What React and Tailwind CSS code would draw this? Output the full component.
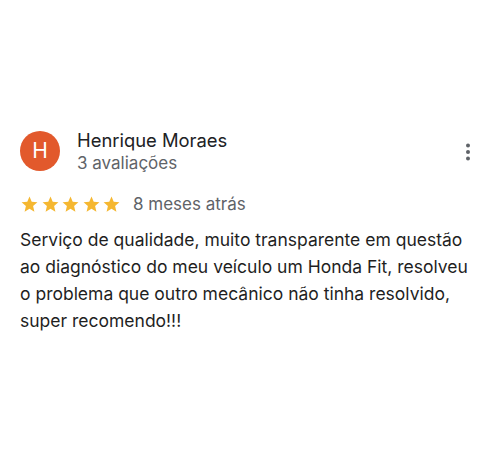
import React from "react";

const Star = () => (
  <svg width="19" height="19" viewBox="0 0 24 24" className="block">
    <path fill="#f5b731" d="M12 17.27L18.18 21l-1.64-7.03L22 9.24l-7.19-.61L12 2 9.19 8.63 2 9.24l5.46 4.73L5.82 21z" />
  </svg>
);

export default function App() {
  return (
    <div className="w-[500px] h-[466px] bg-white" style={{ fontFamily: "Inter, 'Liberation Sans', sans-serif" }}>
      <div className="pt-[131px] pl-[20px] pr-[20px]">
        <div className="flex items-start">
          <div className="w-[40px] h-[40px] rounded-full bg-[#e2592c] flex items-center justify-center text-white text-[21px] shrink-0">
            H
          </div>
          <div className="ml-[17px] flex-1 -mt-[3px]">
            <div className="text-[18.4px] leading-[24px] text-[#202124]">Henrique Moraes</div>
            <div className="text-[17px] leading-[22px] text-[#5f6368]">3 avaliações</div>
          </div>
          <svg width="24" height="24" viewBox="0 0 24 24" className="mt-[9px] mr-0">
            <circle cx="12" cy="5.5" r="2" fill="#5f6368" />
            <circle cx="12" cy="12" r="2" fill="#5f6368" />
            <circle cx="12" cy="18.5" r="2" fill="#5f6368" />
          </svg>
        </div>
        <div className="flex items-center mt-[18px]">
          <div className="flex gap-[1.5px]">
            <Star /><Star /><Star /><Star /><Star />
          </div>
          <span className="ml-[12px] text-[17px] text-[#5f6368]">8 meses atrás</span>
        </div>
        <p className="mt-[8px] text-[17.5px] leading-[27px] text-[#1f1f1f]">
          Serviço de qualidade, muito transparente em questão ao diagnóstico do meu veículo um Honda Fit, resolveu o problema que outro mecânico não tinha resolvido, super recomendo!!!
        </p>
      </div>
    </div>
  );
}
